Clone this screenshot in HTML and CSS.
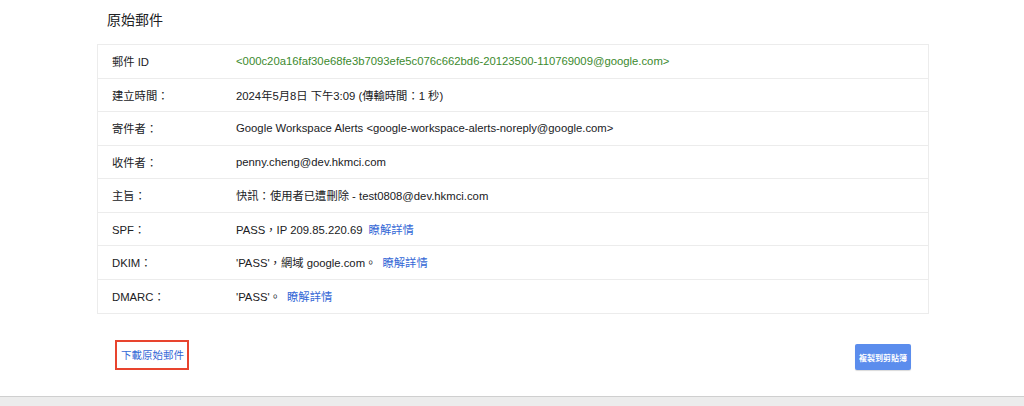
FILE: index.html
```html
<!DOCTYPE html>
<html lang="zh-Hant">
<head>
  <meta charset="UTF-8">
  <meta name="viewport" content="width=device-width, initial-scale=1.0">
  <title>原始郵件</title>
  <link rel="stylesheet" href="styles.css">
</head>
<body>
  <div class="page">
    <div class="container">
      <h1>原始郵件</h1>

      <div class="details">
        <div class="row">
          <div class="label">郵件 ID</div>
          <div class="value msg-id">&lt;000c20a16faf30e68fe3b7093efe5c076c662bd6-20123500-110769009@google.com&gt;</div>
        </div>
        <div class="row">
          <div class="label">建立時間：</div>
          <div class="value">2024年5月8日 下午3:09 (傳輸時間：1 秒)</div>
        </div>
        <div class="row">
          <div class="label">寄件者：</div>
          <div class="value">Google Workspace Alerts &lt;google-workspace-alerts-noreply@google.com&gt;</div>
        </div>
        <div class="row">
          <div class="label">收件者：</div>
          <div class="value">penny.cheng@dev.hkmci.com</div>
        </div>
        <div class="row">
          <div class="label">主旨：</div>
          <div class="value">快訊：使用者已遭刪除 - test0808@dev.hkmci.com</div>
        </div>
        <div class="row">
          <div class="label">SPF：</div>
          <div class="value">PASS，IP 209.85.220.69 <a href="#" class="more">瞭解詳情</a></div>
        </div>
        <div class="row">
          <div class="label">DKIM：</div>
          <div class="value">'PASS'，網域 google.com。 <a href="#" class="more">瞭解詳情</a></div>
        </div>
        <div class="row">
          <div class="label">DMARC：</div>
          <div class="value">'PASS'。 <a href="#" class="more">瞭解詳情</a></div>
        </div>
      </div>

      <div class="actions">
        <a href="#" class="download">下載原始郵件</a>
        <button class="btn-copy">複製到剪貼簿</button>
      </div>
    </div>
  </div>
  <div class="footer-bar"></div>
</body>
</html>
```

FILE: styles.css
```css
* {
  margin: 0;
  padding: 0;
  box-sizing: border-box;
}

body {
  font-family: "Liberation Sans", Arial, "Noto Sans CJK TC", sans-serif;
  color: #202124;
  background: #fff;
  height: 406px;
  display: flex;
  flex-direction: column;
  overflow: hidden;
}

.page {
  flex: 1;
}

.container {
  width: 832px;
  margin-left: 97px;
}

h1 {
  font-size: 14px;
  font-weight: 400;
  line-height: 20px;
  padding: 10px 0 0 10px;
  height: 44px;
  color: #202124;
}

.details {
  border: 1px solid #ececec;
}

.row {
  display: flex;
  align-items: center;
  height: 33.5px;
  border-bottom: 1px solid #ececec;
  font-size: 11.3px;
}

.row:last-child {
  border-bottom: none;
}

.label {
  width: 138px;
  padding-left: 14px;
  flex-shrink: 0;
}

.value {
  flex: 1;
}

.msg-id {
  color: #3c8a2e;
}

.more {
  color: #3367d6;
  text-decoration: none;
  margin-left: 3px;
}

.actions {
  display: flex;
  justify-content: space-between;
  align-items: center;
  padding: 26px 18px 0 18px;
}

.download {
  font-size: 10.5px;
  color: #3367d6;
  text-decoration: none;
  border: 2px solid #e8442e;
  padding: 6px 3px 6px 4px;
  line-height: 14px;
}

.btn-copy {
  font-family: inherit;
  font-size: 8px;
  font-weight: 700;
  color: #fff;
  background: #5b8ded;
  border: none;
  border-radius: 2px;
  width: 56px;
  height: 26px;
  margin-top: 4px;
  box-shadow: 0 1px 1px rgba(0, 0, 0, 0.15);
}

.footer-bar {
  height: 10px;
  background: #ececec;
  border-top: 1px solid #cfcfcf;
}
```
